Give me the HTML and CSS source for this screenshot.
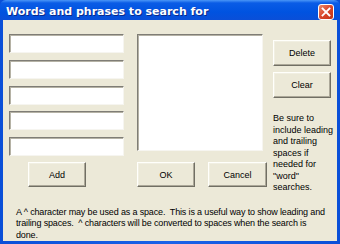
FILE: index.html
```html
<!DOCTYPE html>
<html lang="en">
<head>
    <meta charset="UTF-8">
    <title>Words and phrases to search for</title>
    <link rel="stylesheet" href="styles.css">
</head>
<body>
    <div class="window">
        <!-- Barre de titre -->
        <div class="titlebar">
            <span class="title">Words and phrases to search for</span>
            <div class="close">
                <svg width="10" height="10" viewBox="0 0 10 10">
                    <path d="M1.5 1.5 L8.5 8.5 M8.5 1.5 L1.5 8.5" stroke="#fff" stroke-width="1.8" stroke-linecap="square"/>
                </svg>
            </div>
        </div>

        <div class="dialog">
            <div class="main">
                <!-- Champs de saisie -->
                <div class="col-left">
                    <input class="field" type="text">
                    <input class="field" type="text">
                    <input class="field" type="text">
                    <input class="field" type="text">
                    <input class="field" type="text">
                    <button class="btn btn-add">Add</button>
                </div>

                <!-- Liste -->
                <div class="col-mid">
                    <div class="listbox"></div>
                    <div class="row-btns">
                        <button class="btn">OK</button>
                        <button class="btn btn-cancel">Cancel</button>
                    </div>
                </div>

                <!-- Boutons de droite -->
                <div class="col-right">
                    <button class="btn btn-tall">Delete</button>
                    <button class="btn btn-tall">Clear</button>
                    <p class="hint">Be sure to include leading and trailing spaces if needed for "word" searches.</p>
                </div>
            </div>

            <p class="note">A ^ character may be used as a space.&nbsp; This is a useful way to show leading and trailing spaces.&nbsp; ^ characters will be converted to spaces when the search is done.</p>
        </div>
    </div>
</body>
</html>
```

FILE: styles.css
```css
body {
    margin: 0;
    font-family: "Liberation Sans", Arial, sans-serif;
    font-size: 9px;
    color: #000;
}
.window {
    width: 340px;
    height: 244px;
    display: flex;
    flex-direction: column;
    background: linear-gradient(to right, #0a4fd8, #1b62e8 50%, #0a4fd8);
}
.titlebar {
    height: 22px;
    display: flex;
    align-items: center;
    justify-content: space-between;
    padding: 0 6px 0 6px;
    border-radius: 6px 6px 0 0;
    background: linear-gradient(to bottom, #4a96f7 0%, #0a5ce6 15%, #0053e0 60%, #0a4fd8 100%);
}
.title {
    color: white;
    font-family: "DejaVu Sans", sans-serif;
    font-weight: bold;
    font-size: 11px;
    text-shadow: 1px 1px 0 #0a2a8a;
    margin-top: 2px;
}
.close {
    width: 14px;
    height: 14px;
    border: 1px solid white;
    border-radius: 3px;
    background: linear-gradient(135deg, #e88a6a, #d9452a 50%, #c23416);
    display: flex;
    align-items: center;
    justify-content: center;
    margin-top: 3px;
}
.dialog {
    flex: 1;
    margin: 0 3px 3px 3px;
    background-color: #ece9d8;
    padding: 14px 0 0 6px;
}
.main {
    display: flex;
}
.col-left {
    width: 115px;
    display: flex;
    flex-direction: column;
}
.field {
    box-sizing: border-box;
    height: 19px;
    width: 115px;
    margin: 0 0 6.75px 0;
    background: white;
    border: 1px solid;
    border-color: #7f7d76 #f6f5f0 #f6f5f0 #7f7d76;
    box-shadow: inset 1px 1px 0 #b5b2a5;
    padding: 0;
}
.btn {
    box-sizing: border-box;
    width: 58px;
    height: 25px;
    font-family: "Liberation Sans", Arial, sans-serif;
    font-size: 9px;
    background: #ece9d8;
    border: 1px solid;
    border-color: #fffffb #716f64 #716f64 #fffffb;
    box-shadow: inset -1px -1px 0 #aca899, inset 1px 1px 0 #f1efe2;
    padding: 0;
    color: #000;
}
.btn-add {
    margin: -0.75px 0 0 19px;
}
.col-mid {
    width: 130px;
    margin-left: 13px;
}
.listbox {
    box-sizing: border-box;
    width: 126px;
    height: 117px;
    background: white;
    border: 1px solid;
    border-color: #7f7d76 #f6f5f0 #f6f5f0 #7f7d76;
    box-shadow: inset 1px 1px 0 #b5b2a5;
}
.row-btns {
    display: flex;
    gap: 13px;
    margin-top: 11px;
}
.btn-cancel {
    width: 59px;
}
.col-right {
    margin-left: 6px;
    padding-top: 6px;
    width: 62px;
}
.btn-tall {
    height: 26px;
    display: block;
    margin-bottom: 6px;
}
.hint {
    margin: 15px 0 0 0;
    line-height: 11.5px;
}
.note {
    margin: 13px 0 0 7px;
    width: 310px;
    letter-spacing: -0.15px;
    line-height: 11.5px;
}
```
